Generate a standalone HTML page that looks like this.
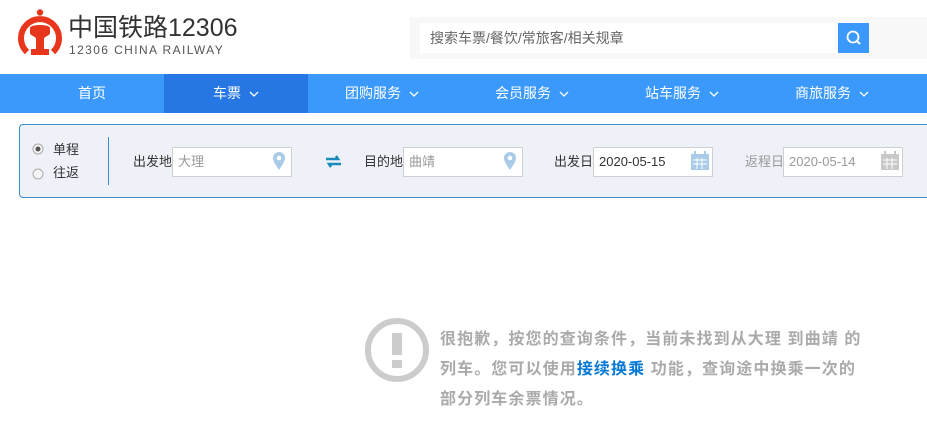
<!DOCTYPE html>
<html><head><meta charset="utf-8"><style>
*{margin:0;padding:0;box-sizing:border-box}
body{width:927px;height:445px;background:#fff;font-family:"Liberation Sans","Noto Sans CJK SC",sans-serif;position:relative;overflow:hidden}
.a{position:absolute}
.nav{top:74px;left:0;width:927px;height:39px;background:#3b99fc}
.ni{top:0;height:39px;line-height:39px;color:#fff;font-size:14px;text-align:center;width:144px}
.ni svg{margin-left:8px;vertical-align:middle}
.panel{left:19px;top:124px;width:920px;height:74px;background:#eef1f8;border:1px solid #3d8fc3;border-radius:4px}
.inp{height:30px;background:#fff;border:1px solid #cfcfcf;font-size:13px;line-height:28px;padding-left:5px;color:#999}
.lbl{font-size:13px;color:#333;line-height:30px}
</style></head><body>
<svg class="a" style="left:18px;top:9px" width="44" height="50" viewBox="0 0 44 50">
<path d="M9 43 A19 19 0 1 1 35 43" fill="none" stroke="#e8361c" stroke-width="6"/>
<circle cx="22" cy="3.5" r="3.2" fill="#e8361c"/>
<path d="M12 19 C12 15 32 15 32 19 V24 C32 27 26 27 26 30 V40 H31 V46 H13 V40 H18 V30 C18 27 12 27 12 24Z" fill="#e8361c"/>
</svg>
<div class="a" style="left:68px;top:13px;font-size:25px;color:#333;line-height:30px">中国铁路12306</div>
<div class="a" style="left:69px;top:43px;font-size:12px;color:#555;letter-spacing:1.4px">12306 CHINA RAILWAY</div>
<div class="a" style="left:410px;top:17px;width:517px;height:42px;background:#f8f8f8"></div>
<div class="a" style="left:420px;top:23px;width:418px;height:30px;background:#fff;font-size:14px;color:#666;line-height:30px;padding-left:10px">搜索车票/餐饮/常旅客/相关规章</div>
<div class="a" style="left:838px;top:23px;width:31px;height:30px;background:#3b99fc">
<svg width="31" height="30"><circle cx="15" cy="14" r="5.5" fill="none" stroke="#fff" stroke-width="1.8"/><path d="M19 18 L22 21" stroke="#fff" stroke-width="2"/></svg></div>
<div class="a nav">
<div class="a ni" style="left:20px">首页</div>
<div class="a ni" style="left:164px;background:#2676e3">车票<svg width="10" height="6"><path d="M1 1 L5 5 L9 1" stroke="#fff" fill="none" stroke-width="1.3"/></svg></div>
<div class="a ni" style="left:310px">团购服务<svg width="10" height="6"><path d="M1 1 L5 5 L9 1" stroke="#fff" fill="none" stroke-width="1.3"/></svg></div>
<div class="a ni" style="left:460px">会员服务<svg width="10" height="6"><path d="M1 1 L5 5 L9 1" stroke="#fff" fill="none" stroke-width="1.3"/></svg></div>
<div class="a ni" style="left:610px">站车服务<svg width="10" height="6"><path d="M1 1 L5 5 L9 1" stroke="#fff" fill="none" stroke-width="1.3"/></svg></div>
<div class="a ni" style="left:760px">商旅服务<svg width="10" height="6"><path d="M1 1 L5 5 L9 1" stroke="#fff" fill="none" stroke-width="1.3"/></svg></div>
</div>
<div class="a panel"></div>
<svg class="a" style="left:32px;top:143px" width="12" height="40"><circle cx="6" cy="6" r="5" fill="#f4f4f4" stroke="#aaa"/><circle cx="6" cy="6" r="2.5" fill="#555"/><circle cx="6" cy="31" r="5" fill="#f4f4f4" stroke="#aaa"/></svg>
<div class="a" style="left:53px;top:141px;font-size:13px;color:#333;line-height:18px">单程<br><span style="display:block;margin-top:5px">往返</span></div>
<div class="a" style="left:108px;top:137px;width:1px;height:48px;background:#3d8fc3"></div>
<div class="a lbl" style="left:133px;top:147px">出发地</div>
<div class="a inp" style="left:172px;top:147px;width:120px">大理</div>
<div class="a lbl" style="left:364px;top:147px">目的地</div>
<div class="a inp" style="left:403px;top:147px;width:120px">曲靖</div>
<svg class="a" style="left:272px;top:151px" width="14" height="20"><path d="M7 19 C3 13 1 10 1 7 A6 6 0 0 1 13 7 C13 10 11 13 7 19Z" fill="#a9cbe8"/><circle cx="7" cy="7" r="2.3" fill="#fff"/></svg>
<svg class="a" style="left:503px;top:151px" width="14" height="20"><path d="M7 19 C3 13 1 10 1 7 A6 6 0 0 1 13 7 C13 10 11 13 7 19Z" fill="#a9cbe8"/><circle cx="7" cy="7" r="2.3" fill="#fff"/></svg>
<svg class="a" style="left:325px;top:155px" width="17" height="13"><path d="M1 4 H13 L11 1 M16 9 H4 L6 12" stroke="#1a8bb8" stroke-width="2.5" fill="none"/></svg>
<div class="a lbl" style="left:554px;top:147px">出发日</div>
<div class="a inp" style="left:593px;top:147px;width:120px;color:#333">2020-05-15</div>
<div class="a lbl" style="left:745px;top:147px;color:#999">返程日</div>
<div class="a inp" style="left:783px;top:147px;width:120px">2020-05-14</div>
<svg class="a" style="left:690px;top:151px" width="20" height="20"><rect x="1" y="3" width="18" height="16" fill="#a9cbe8"/><rect x="4" y="0" width="2" height="5" fill="#a9cbe8"/><rect x="14" y="0" width="2" height="5" fill="#a9cbe8"/><path d="M3 9H17M3 13H17M7 7V18M12 7V18" stroke="#fff"/></svg>
<svg class="a" style="left:880px;top:151px" width="20" height="20"><rect x="1" y="3" width="18" height="16" fill="#c8c8c8"/><rect x="4" y="0" width="2" height="5" fill="#c8c8c8"/><rect x="14" y="0" width="2" height="5" fill="#c8c8c8"/><path d="M3 9H17M3 13H17M7 7V18M12 7V18" stroke="#fff"/></svg>
<svg class="a" style="left:364px;top:317px" width="66" height="66"><circle cx="33" cy="33" r="29" fill="none" stroke="#ccc" stroke-width="6"/><rect x="28" y="16" width="10" height="22" fill="#ccc"/><rect x="28" y="43" width="10" height="8" fill="#ccc"/></svg>
<div class="a" style="left:440px;top:325px;width:425px;font-size:16px;font-weight:bold;color:#aaa;line-height:30px;letter-spacing:1.1px">很抱歉，按您的查询条件，当前未找到从大理 到曲靖 的<br>列车。您可以使用<span style="color:#0577d4">接续换乘</span> 功能，查询途中换乘一次的<br>部分列车余票情况。</div>
</body></html>
